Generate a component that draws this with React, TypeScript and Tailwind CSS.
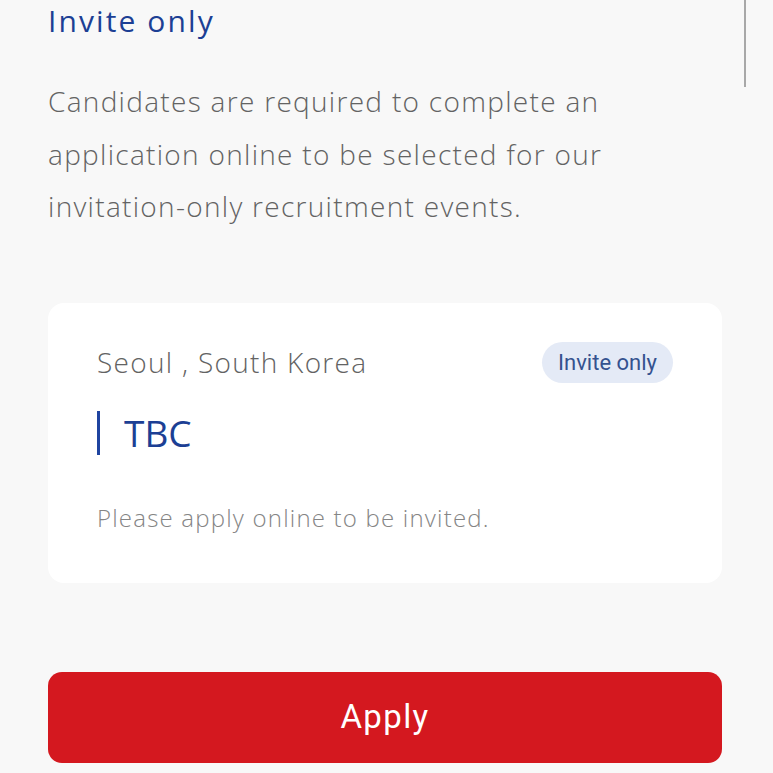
import React from "react";

export default function App() {
  return (
    <div className="relative min-h-[773px] w-full bg-[#f8f8f8] pl-12 pr-[51px] pb-10" style={{ fontFamily: '"Open Sans", sans-serif' }}>
      <div className="absolute left-[744px] top-0 h-[87px] w-[2px] bg-[#a8a8a8]" />
      <h2 className="pt-[1px] text-[30px] leading-[40px] font-normal tracking-[2.1px] text-[#1c3f94]">Invite only</h2>
      <p className="mt-[34px] text-[28px] leading-[52.5px] font-light tracking-[1.3px] text-[#636363]">
        Candidates are required to complete an<br />
        application online to be selected for our<br />
        invitation-only recruitment events.
      </p>
      <div className="mt-[70px] rounded-[16px] bg-white pl-[49px] pr-[49px] pt-[39px] pb-[49px]">
        <div className="flex items-center justify-between">
          <span className="text-[28px] leading-[41px] font-light tracking-[1.3px] text-[#636363]">Seoul , South Korea</span>
          <span
            className="flex h-[41px] items-center rounded-full bg-[#e4eaf6] px-4 text-[22px] text-[#34528f]"
            style={{ fontFamily: 'Roboto, sans-serif' }}
          >
            Invite only
          </span>
        </div>
        <div className="mt-[28px] flex items-center">
          <div className="h-[44px] w-[3px] bg-[#1f44a0]" />
          <span className="ml-[24px] text-[37px] leading-[44px] text-[#1c3f94]">TBC</span>
        </div>
        <p className="mt-[47px] text-[24px] leading-[32px] font-light tracking-[1.2px] text-[#858585]">Please apply online to be invited.</p>
      </div>
      <button
        className="mt-[89px] flex h-[91px] w-full items-center justify-center rounded-[14px] bg-[#d4181f] text-[33px] tracking-[1.4px] text-white"
        style={{ fontFamily: 'Roboto, sans-serif' }}
      >
        Apply
      </button>
    </div>
  );
}
